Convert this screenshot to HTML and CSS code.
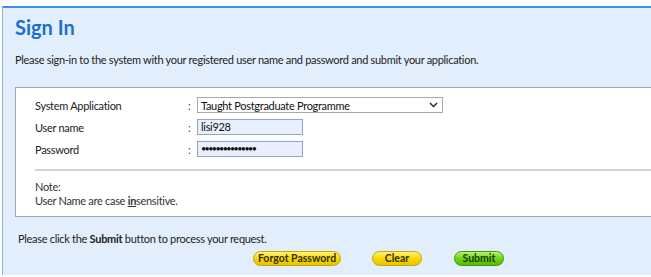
FILE: index.html
```html
<!DOCTYPE html>
<html>
<head>
<meta charset="utf-8">
<link rel="stylesheet" href="styles.css">
</head>
<body>
<div class="panel">
  <h1 class="title">Sign In</h1>
  <p class="intro">Please sign-in to the system with your registered user name and password and submit your application.</p>
  <div class="box">
    <div class="form">
      <div class="row">
        <span class="label">System Application</span>
        <span class="colon">:</span>
        <div class="select"><span>Taught Postgraduate Programme</span>
          <svg class="chev" width="9" height="6" viewBox="0 0 9 6"><path d="M1 1 L4.5 4.5 L8 1" fill="none" stroke="#222" stroke-width="1.4"/></svg>
        </div>
      </div>
      <div class="row">
        <span class="label">User name</span>
        <span class="colon">:</span>
        <div class="input">lisi928</div>
      </div>
      <div class="row">
        <span class="label">Password</span>
        <span class="colon">:</span>
        <div class="input pw">•••••••••••••••</div>
      </div>
    </div>
    <hr class="sep">
    <div class="note">
      <div>Note:</div>
      <div>User Name are case <b class="u">in</b>sensitive.</div>
    </div>
  </div>
  <p class="hint">Please click the <b>Submit</b> button to process your request.</p>
  <div class="buttons">
    <span class="btn yellow forgot">Forgot Password</span>
    <span class="btn yellow clear">Clear</span>
    <span class="btn green submit">Submit</span>
  </div>
</div>
</body>
</html>
```
FILE: styles.css
```css
html, body { margin: 0; padding: 0; background: #fff; }
body {
  font-family: "Lato", "Open Sans", sans-serif;
  font-size: 11px;
  letter-spacing: -0.3px;
  color: #222;
  width: 651px;
  height: 277px;
  overflow: hidden;
}
.panel {
  margin: 6px 0 0 2px;
  border-top: 2px solid #3f8fe3;
  border-left: 1px solid #8cb6e8;
  background: #e3eefd;
  height: 269px;
  box-sizing: border-box;
  padding: 0 0 0 12px;
}
.title {
  margin: 0;
  padding-top: 6px;
  font-size: 20px;
  line-height: 26px;
  font-weight: 700;
  letter-spacing: 0;
  color: #1b6fcf;
}
.intro {
  margin: 12px 0 0 0;
  line-height: 15px;
}
.box {
  margin-top: 20px;
  background: #fff;
  border: 1px solid #a7a7a7;
  border-right: none;
  height: 130px;
  box-sizing: border-box;
  padding: 9px 0 0 19px;
}
.row {
  display: flex;
  align-items: center;
  height: 16px;
  margin-bottom: 6px;
}
.label { width: 153px; }
.colon { width: 9px; color: #444; }
.select {
  width: 246px;
  height: 16px;
  box-sizing: border-box;
  border: 1px solid #a9a9a9;
  background: #fff;
  display: flex;
  align-items: center;
  justify-content: space-between;
  padding: 0 4px 0 3px;
  color: #111;
}
.input {
  width: 106px;
  height: 16px;
  box-sizing: border-box;
  border: 1px solid #8fa6c7;
  background: #e8f0fe;
  padding: 0 3px;
  line-height: 14px;
  color: #111;
}
.pw { font-size: 9px; letter-spacing: -1.6px; }
.sep {
  margin: 12px 0 0 0;
  border: none;
  border-top: 2px solid #d4d4d4;
  height: 0;
}
.note {
  margin-top: 9px;
  line-height: 14px;
  color: #333;
}
.u { text-decoration: underline; font-weight: 700; }
.hint {
  margin: 14px 0 0 3px;
  line-height: 15px;
}
.buttons {
  display: flex;
  margin-top: 5px;
  padding-left: 238px;
}
.btn {
  display: inline-block;
  height: 15px;
  line-height: 13px;
  box-sizing: border-box;
  border-radius: 8px;
  text-align: center;
  font-size: 10.5px;
  font-weight: 700;
  letter-spacing: 0;
  color: #3a2e00;
}
.yellow {
  background: linear-gradient(#fff27a, #f6d800 50%, #e6c300);
  border: 1px solid #c9a800;
}
.green {
  background: linear-gradient(#b8f56a, #6fd21a 50%, #55b80a);
  border: 1px solid #3d9a06;
  color: #1e3a00;
}
.forgot { width: 88px; }
.clear { width: 50px; margin-left: 31px; }
.submit { width: 50px; margin-left: 32px; }
```
